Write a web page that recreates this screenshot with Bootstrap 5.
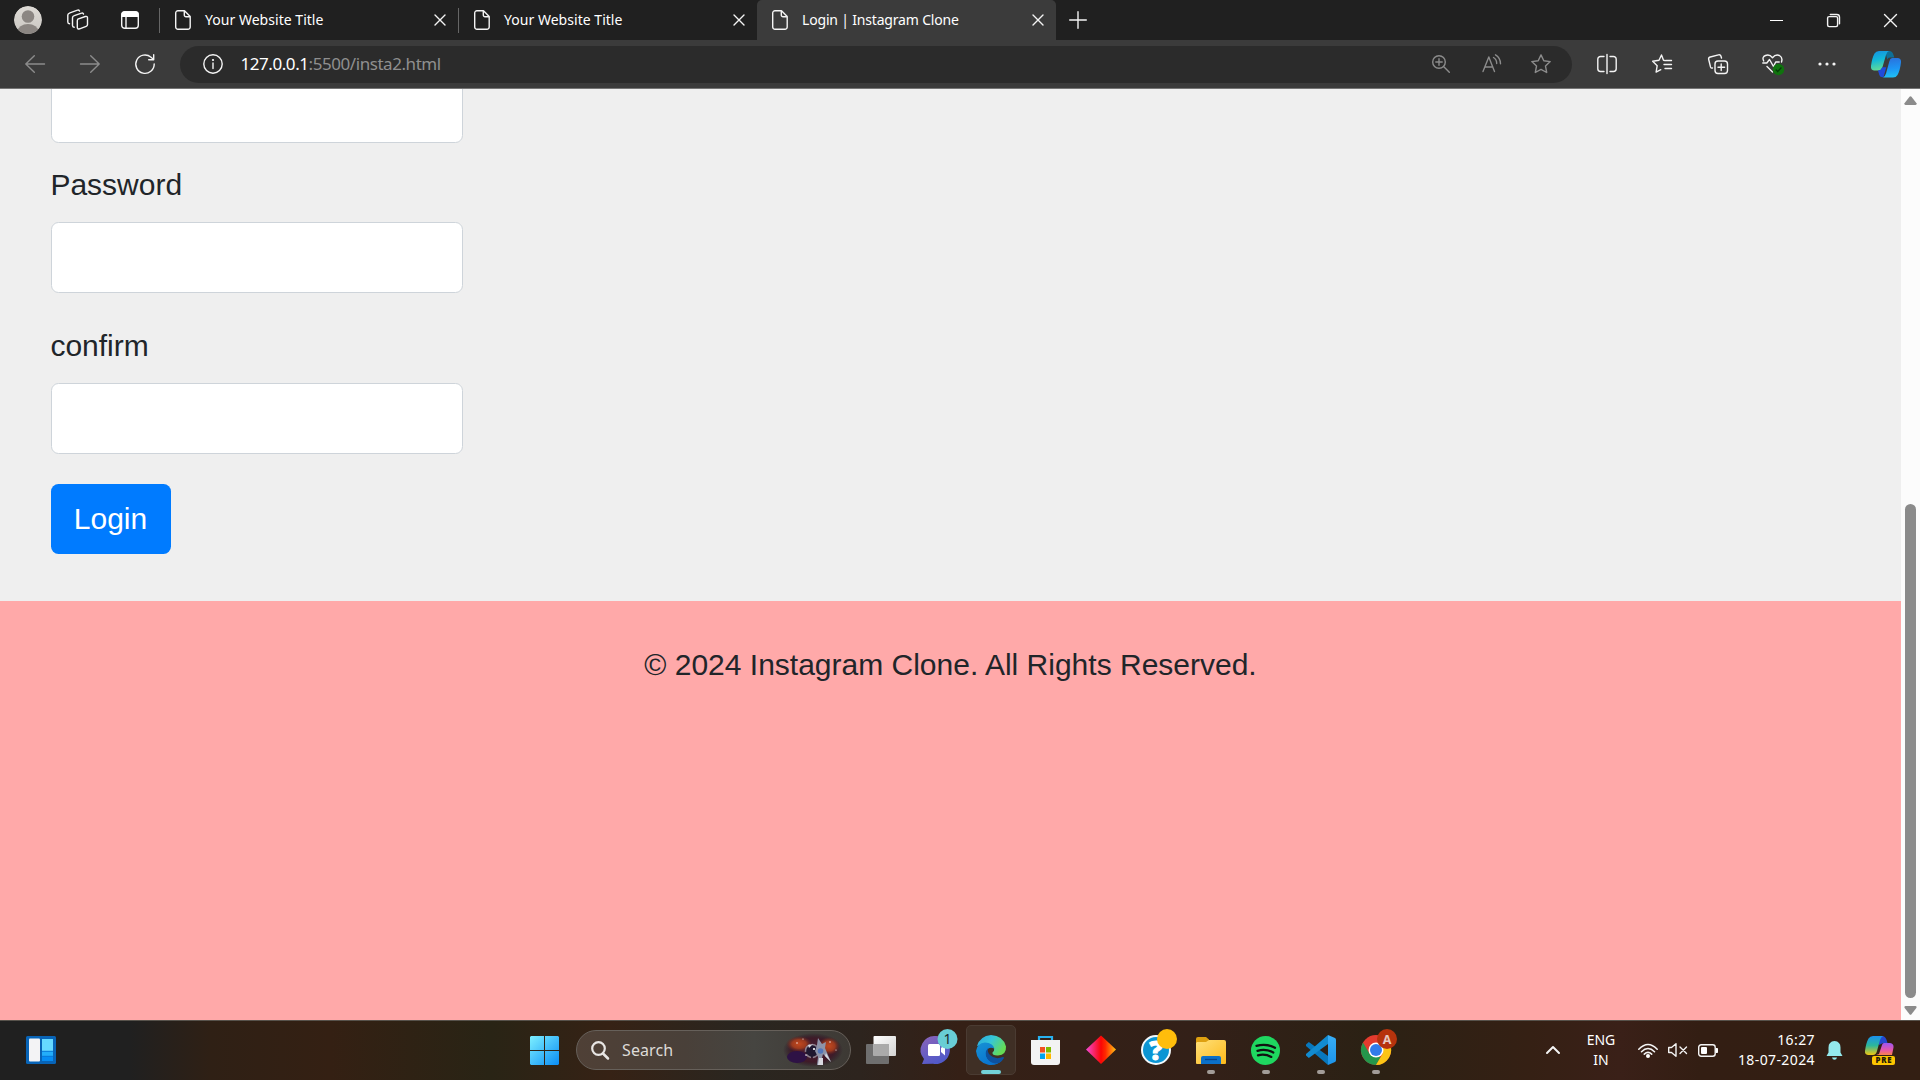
<!DOCTYPE html>
<html lang="en">
<head>
<meta charset="utf-8">
<meta name="viewport" content="width=device-width, initial-scale=1">
<title>Login | Instagram Clone</title>
<link href="https://cdn.jsdelivr.net/npm/bootstrap@5.3.0/dist/css/bootstrap.min.css" rel="stylesheet">
<style>
  body { font-family: "Noto Sans", "Open Sans", sans-serif; width: 1920px; height: 1080px; background: #202020; }
  svg { display: block; flex: none; overflow: visible; }
  .ln { fill: none; stroke: #f4f4f4; stroke-width: 1.4; stroke-linecap: round; stroke-linejoin: round; }
  .dim { stroke: #8c8c8c; }

  /* tab strip */
  .tabstrip { height: 40px; background: #202020; color: #fff; }
  .avatar { margin-left: 14px; }
  .btab { height: 40px; width: 299px; padding: 0 12px 0 16px; font-size: 14px; letter-spacing: .03px; line-height: 40px; }
  .btab span { margin-left: 14px; }
  .btab.plain { position: relative; }
  .btab.plain::before { content: ""; position: absolute; left: 0; top: 8px; width: 1px; height: 25px; background: #666; }
  .btab.current { background: #3b3b3b; border-radius: 5px 5px 0 0; letter-spacing: -.18px; padding-left: 15px; }
  .winbtns { width: 172px; }

  /* toolbar */
  .toolbar { height: 49px; background: #3b3b3b; border-bottom: 1px solid #757575; padding-left: 7px; }
  .slot { width: 55px; display: flex; justify-content: center; align-items: center; flex: none; }
  .pill { width: 1392px; height: 37px; margin: 0 7px 0 8px; border-radius: 19px; background: #2b2b2b; color: #8f8f8f; font-size: 17px; padding: 0 21px 0 23px; letter-spacing: -.44px; }
  .pill .url { margin-left: 18px; white-space: nowrap; }

  /* page */
  .page { height: 931px; font-family: "Liberation Sans", Arial, sans-serif; font-size: 30px; color: #212529; line-height: 1.5; }
  .loginarea { height: 512px; background: #efefef; padding: 0 0 47px 51px; }
  .fieldbox { width: 412px; height: 71px; border: 1px solid #ced4da; border-radius: 7.5px; flex: none; background: #fff; }
  .loginarea label { height: 45px; margin-bottom: 15px; margin-left: -.6px; flex: none; }
  .loginbtn { background: #007bff; border: 0; color: #fff; font-size: 30px; line-height: 45px; padding: 12px 1px 13px 0; width: 120px; border-radius: 7.5px; flex: none; }
  .foot { background: #ffa9a9; padding-top: 41px; }
  .scroll { width: 19px; background: #fcfcfc; padding: 7px 4px 5px; }
  .thumb { width: 11px; height: 494px; border-radius: 6px; background: #8b8b8b; }

  /* taskbar */
  .taskbar { height: 60px; border-top: 1px solid #57524b; color: #fff; padding-bottom: 1px;
    background: linear-gradient(90deg, #202020 0, #202020 130px, #2f2015 210px, #342013 330px, #292415 490px, #362215 610px, #2a2620 740px, #2d241e 860px, #352016 960px, #332018 1200px, #2b2114 1370px, #352014 1530px, #3a2018 1620px, #331e13 1700px, #331f13 1920px); }
  .search { width: 275px; height: 40px; border: 1px solid #66605a; border-radius: 20px; margin: 0 2px 0 4px; font-size: 16px; color: #dedbd8; padding: 0 8px 0 14px;
    background: linear-gradient(90deg, #4f4036, #494039 40%, #464541 65%, #3d3934); letter-spacing: .1px; }
  .task { height: 58px; position: relative; }
  .task.run::after { content: ""; position: absolute; bottom: 5px; left: 24px; width: 8px; height: 4px; border-radius: 2px; background: #a29c98; }
  .task.open::before { content: ""; position: absolute; left: 3px; top: 4px; width: 50px; height: 50px; border-radius: 5px; background: #3f2f25; border: 1px solid #4a3b32; }
  .task.open::after { content: ""; position: absolute; bottom: 5px; left: 18px; width: 20px; height: 4px; border-radius: 2px; background: #73d1d8; }
  .task svg { position: relative; }
  .tray { font-size: 14px; line-height: 20px; }
  .clock { width: 97px; letter-spacing: .4px; }
</style>
</head>
<body class="d-flex flex-column overflow-hidden">

<svg width="0" height="0" class="position-absolute">
  <defs>
    <symbol id="file" viewBox="0 0 16 20"><path class="ln" d="M3 .7h6.5L15.2 6.500V17a2.300 2.300 0 0 1-2.300 2.300H3A2.300 2.300 0 0 1 .7 17V3A2.300 2.300 0 0 1 3 .7zM9.300 .9V5a1.700 1.700 0 0 0 1.700 1.700h4"/></symbol>
    <symbol id="cross" viewBox="0 0 12 12"><path class="ln" d="M1 1l10 10M11 1L1 11"/></symbol>
    <linearGradient id="g-av" x2="0" y2="1"><stop stop-color="#dedbd6"/><stop offset="1" stop-color="#c9c6c1"/></linearGradient>
    <linearGradient id="g-win" x2="1" y2="1"><stop stop-color="#7df0ff"/><stop offset="1" stop-color="#0a8df5"/></linearGradient>
    <linearGradient id="g-cp1" x2=".2" y2="1"><stop stop-color="#168fe0"/><stop offset=".5" stop-color="#12b8d8"/><stop offset="1" stop-color="#5ed99a"/></linearGradient>
    <linearGradient id="g-cp2" x2=".1" y2="1"><stop stop-color="#2b6fda"/><stop offset=".6" stop-color="#1d96f5"/><stop offset="1" stop-color="#20bdf4"/></linearGradient>
    <linearGradient id="g-pr1" x2="0" y2="1"><stop stop-color="#1b91ee"/><stop offset=".5" stop-color="#2cb79b"/><stop offset="1" stop-color="#f1c610"/></linearGradient>
    <linearGradient id="g-pr2" x2="0" y2="1"><stop stop-color="#9b55f3"/><stop offset=".6" stop-color="#e757a8"/><stop offset="1" stop-color="#f9824b"/></linearGradient>
    <linearGradient id="g-chat" x2=".5" y2="1"><stop stop-color="#8c64b8"/><stop offset="1" stop-color="#5159c9"/></linearGradient>
    <linearGradient id="g-edge1" x2="1" y2=".5"><stop stop-color="#2aa6dc"/><stop offset=".5" stop-color="#36c6d8"/><stop offset="1" stop-color="#65dc55"/></linearGradient>
    <linearGradient id="g-edge2" x2=".6" y2="1"><stop stop-color="#1792d4"/><stop offset="1" stop-color="#0872cf"/></linearGradient>
    <linearGradient id="g-dia"><stop stop-color="#f44ad8"/><stop offset=".5" stop-color="#fb0505"/><stop offset=".65" stop-color="#ff2a00"/><stop offset="1" stop-color="#ffc414"/></linearGradient>
    <linearGradient id="g-fold" x2="1" y2="1"><stop stop-color="#ffe07a"/><stop offset="1" stop-color="#fdb91a"/></linearGradient>
    <linearGradient id="g-tv" x2="1" y2="1"><stop stop-color="#fff"/><stop offset="1" stop-color="#d2d2d2"/></linearGradient>
    <radialGradient id="g-neb"><stop stop-color="#4a2038"/><stop offset=".7" stop-color="#3f1a28"/><stop offset="1" stop-color="#2a1424" stop-opacity="0"/></radialGradient>
    <radialGradient id="g-fire"><stop stop-color="#c2481f"/><stop offset=".55" stop-color="#9c3a1e"/><stop offset="1" stop-color="#6b2620" stop-opacity="0"/></radialGradient>
    <linearGradient id="g-vs" x2="0" y2="1"><stop stop-color="#38aef6"/><stop offset="1" stop-color="#1c94ea"/></linearGradient>
  </defs>
</svg>

<header class="tabstrip d-flex align-items-center flex-shrink-0">
  <svg class="avatar" width="28" height="28" viewBox="0 0 28 28"><clipPath id="avc"><circle cx="14" cy="14" r="14"/></clipPath><g clip-path="url(#avc)"><circle cx="14" cy="14" r="14" fill="url(#g-av)"/><circle cx="14" cy="10.500" r="6.300" fill="#8b8682"/><ellipse cx="14" cy="25.500" rx="10.500" ry="7.500" fill="#8b8682"/></g></svg>
  <svg width="22" height="22" viewBox="0 0 22 22" style="margin-left:25px"><g class="ln"><path d="M10.800 10.200l7.500-2.700q2.200-.5 2.200 1.300v6.700q0 1.400-1.300 1.900l-6.600 2.400q-2.300.6-2.300-1.200v-6.500q0-1.300.5-1.900z"/><path d="M16.500 5q-.5-1.500-2-.9L7.300 6.700q-1.800.6-1.800 2V16.500q0 1.500 1.700 1.700"/><path d="M12.500 2q-.7-1.400-2-.9L2.900 3.800Q.8 4.500.8 6v7q0 1.500 1.700 1.700"/></g></svg>
  <svg width="18" height="18" viewBox="0 0 18 18" style="margin-left:32px"><rect x=".7" y=".7" width="16.600" height="16.600" rx="3" class="ln"/><path d="M.5 6V3A2.500 2.500 0 0 1 3 .5h12A2.500 2.500 0 0 1 17.500 3v3z" fill="#fff"/><path class="ln" d="M5 6v11"/></svg>
  <div class="d-flex" style="margin-left:20px">
    <div class="btab plain d-flex align-items-center"><svg width="16" height="20"><use href="#file"/></svg><span>Your Website Title</span><svg class="ms-auto" width="12" height="12"><use href="#cross"/></svg></div>
    <div class="btab plain d-flex align-items-center"><svg width="16" height="20"><use href="#file"/></svg><span>Your Website Title</span><svg class="ms-auto" width="12" height="12"><use href="#cross"/></svg></div>
    <div class="btab current d-flex align-items-center"><svg width="16" height="20"><use href="#file"/></svg><span>Login | Instagram Clone</span><svg class="ms-auto" width="12" height="12"><use href="#cross"/></svg></div>
  </div>
  <svg width="18" height="18" viewBox="0 0 18 18" style="margin-left:13px"><path class="ln" d="M9 .7v16.600M.7 9h16.600"/></svg>
  <div class="winbtns d-flex ms-auto">
    <div class="slot" style="width:57px"><svg width="13" height="13"><path d="M0 6.500h13" stroke="#fff"/></svg></div>
    <div class="slot" style="width:57px"><svg width="13" height="13" viewBox="0 0 13 13"><g class="ln"><rect x=".6" y="2.600" width="10" height="10" rx="1.500"/><path d="M3.300.5h6.500a2.700 2.700 0 0 1 2.700 2.700v6.500"/></g></svg></div>
    <div class="slot" style="width:57px"><svg width="13" height="13" viewBox="0 0 13 13"><path class="ln" d="M.5.5l12 12M12.500.5l-12 12"/></svg></div>
  </div>
</header>

<nav class="toolbar d-flex align-items-center flex-shrink-0">
  <div class="slot"><svg width="20" height="18" viewBox="0 0 20 18"><path class="ln dim" d="M19.500 9H.8M9.300.7L.8 9l8.500 8.300"/></svg></div>
  <div class="slot"><svg width="20" height="18" viewBox="0 0 20 18"><path class="ln dim" d="M.5 9h18.700M10.700.7L19.200 9l-8.500 8.300"/></svg></div>
  <div class="slot"><svg width="20" height="20" viewBox="0 0 20 20"><path class="ln" d="M19.200 10A9.200 9.200 0 1 1 16 3.200l2.700 2.300M18.700.8v4.900h-5"/></svg></div>
  <div class="pill d-flex align-items-center">
    <svg width="20" height="20" viewBox="0 0 20 20" style="margin-left:-.5px"><circle class="ln" cx="10" cy="10" r="9.200"/><path class="ln" d="M10 9v5.500"/><circle cx="10" cy="6" r="1.100" fill="#fff"/></svg>
    <div class="url"><span class="text-white">127.0.0.1</span>:5500/insta2.html</div>
    <svg class="ms-auto" width="18" height="18" viewBox="0 0 18 18"><path class="ln dim" d="M11.800 11.800l5.500 5.500M3.800 7h6.400M7 3.800v6.400"/><circle class="ln dim" cx="7" cy="7" r="6.300"/></svg>
    <svg width="20" height="18" viewBox="0 0 20 18" style="margin-left:32px"><path class="ln dim" d="M1 16.500L6.800 2l5.700 14.500M2.800 12h8M11.500 2.500q3.300 2 3.200 6M13.500-.2q5 3 5 9"/></svg>
    <svg width="20" height="20" viewBox="0 0 20 20" style="margin-left:29px"><path class="ln dim" d="M10 .9l2.800 5.900 6.400.8-4.700 4.500 1.200 6.400L10 15.400l-5.700 3.100 1.200-6.400L.8 7.600l6.400-.8z"/></svg>
  </div>
  <div class="slot"><svg width="20" height="20" viewBox="0 0 20 20"><path class="ln" d="M7 2.500H3.500A2.700 2.700 0 0 0 .8 5.200v9.600a2.700 2.700 0 0 0 2.700 2.700H7M13 2.500h3.500a2.700 2.700 0 0 1 2.700 2.700v9.600a2.700 2.700 0 0 1-2.700 2.700H13M10 .5v19"/></svg></div>
  <div class="slot"><svg width="20" height="20" viewBox="0 0 20 20" style="margin-left:1px"><path class="ln" d="M13 6.500L11.500 6.300 9.500 1 7 6.200.7 7.300l4.500 4.400-1.100 6.400 4.700-2.400M14 6.500h5.500M12 10.500h7.500M13 14.500h6.500"/></svg></div>
  <div class="slot"><svg width="20" height="20" viewBox="0 0 20 20" style="margin-left:2px"><rect class="ln" x="7" y="7" width="12.500" height="12.500" rx="3"/><path class="ln" d="M13.200 10v6.600M10 13.300h6.600M13.500 4l-.6-2q-.6-1.700-2.400-1.200L2.200 3Q.2 3.600.7 5.500l1.800 7.400Q3 14.500 4.500 14"/></svg></div>
  <div class="slot"><svg width="22" height="20" viewBox="0 0 22 20" style="margin-left:3px"><path class="ln" d="M1.700 7Q-.3 3 3.500 1.500 7.500 0 10.500 3.700 13.500 0 17.500 1.500 21 3.500 19.500 8M.8 9h4L7.500 5.500l4 7 2.200-4.500h3.500M5 12.500l5.500 5.500"/><circle cx="16.500" cy="15.500" r="5.800" fill="#10730e"/><path d="M13.700 15.500l2 2 3.700-4" fill="none" stroke="#063c08" stroke-width="1.300"/></svg></div>
  <div class="slot"><svg width="18" height="4"><g fill="#f4f4f4"><circle cx="2" cy="2" r="1.600"/><circle cx="9" cy="2" r="1.600"/><circle cx="16" cy="2" r="1.600"/></g></svg></div>
  <svg width="30" height="27" viewBox="0 0 30 27" style="margin-left:17px"><path d="M14 0h5q2.500.5 3.500 4l.8 2.500H19q-2 0-2.700 2z" fill="#0e6f98"/><path d="M8 0h10q-2 .7-3 4l-3.500 12q-1 3.500-4 3.500H3q-3.500-.5-3-4.500Q1 7 3.500 2.500 5 0 8 0z" fill="url(#g-cp1)"/><path d="M7 19.500q3-.3 4.300-3.300h4L12.500 26q-3 .8-4.200-2z" fill="#1f4bdb"/><path d="M21 7h6q3.500.7 3 4.500-1 8-3.500 12.500Q25 26.500 22 26.500H12q2-.8 3-4l3.300-12Q19 7.300 21 7z" fill="url(#g-cp2)"/></svg>
</nav>

<div class="d-flex page flex-shrink-0">
  <div class="flex-grow-1 d-flex flex-column">
    <main class="loginarea d-flex flex-column justify-content-end align-items-start overflow-hidden">
      <div class="fieldbox" style="margin-bottom:19px"></div>
      <label>Password</label>
      <div class="fieldbox" style="margin-bottom:30px"></div>
      <label>confirm</label>
      <div class="fieldbox" style="margin-bottom:30px"></div>
      <button class="loginbtn text-center" type="button">Login</button>
    </main>
    <footer class="foot flex-grow-1 text-center">© 2024 Instagram Clone. All Rights Reserved.</footer>
  </div>
  <div class="scroll d-flex flex-column align-items-center justify-content-between">
    <svg width="13" height="9" viewBox="0 0 13 9"><path d="M5.500.7q1-1 2 0l5 6.500q.5 1.500-1 1.800H1.500Q0 8.700.5 7.200z" fill="#8b8b8b"/></svg>
    <div class="d-flex flex-column align-items-center" style="gap:8px"><div class="thumb"></div>
    <svg width="13" height="9" viewBox="0 0 13 9"><path d="M5.500 8.300q1 1 2 0l5-6.500Q13 .3 11.500 0h-10Q0 .3.500 1.800z" fill="#8b8b8b"/></svg></div>
  </div>
</div>

<footer class="taskbar d-flex align-items-center flex-shrink-0">
  <svg width="30" height="28" viewBox="0 0 30 28" style="margin:0 461px 0 26px"><rect width="30" height="28" rx="1.500" fill="#0864b7"/><rect x="3" y="2.500" width="11" height="23" rx="1" fill="#f3f3f5"/><path d="M16 3h11v12H16z" fill="#66d9ff"/><path d="M16 15h11v5H16z" fill="#23aefa"/><path d="M16 20h11v5H16z" fill="#068cf3"/><path d="M16 15.300h11M16 20.300h11" stroke="#0878d8"/></svg>
  <div class="slot task"><svg width="29" height="29" viewBox="0 0 29 29"><path fill="url(#g-win)" d="M1 0h13v14H0V1zM15 0h13l1 1v13H15zM0 15h14v14H1l-1-1zM15 15h14v13l-1 1H15z"/></svg></div>
  <div class="search d-flex align-items-center">
    <svg width="18" height="19" viewBox="0 0 18 19"><circle cx="7.500" cy="7.500" r="6.300" fill="none" stroke="#e8e6e4" stroke-width="2.200"/><path d="M12 12.500l5 5" stroke="#e8e6e4" stroke-width="2.500" stroke-linecap="round"/></svg>
    <span style="margin-left:13px">Search</span>
    <svg class="ms-auto" width="58" height="32" viewBox="0 0 58 32"><ellipse cx="29" cy="16" rx="30" ry="17" fill="url(#g-neb)"/><ellipse cx="15" cy="10" rx="13" ry="8" fill="url(#g-fire)"/><ellipse cx="45" cy="12" rx="11" ry="9" fill="url(#g-fire)"/><ellipse cx="13" cy="23" rx="10" ry="6" fill="#2e1245"/><circle cx="28" cy="17" r="6.500" fill="#1f1830" stroke="#8d7f8c" stroke-width="1.500" stroke-dasharray="9 2 5 3"/><path d="M34 4l4 6 4-2-1 6 6 14-8-8-1 4v7h-5l1-8-3-6 2-6z" fill="#8d93a8"/><path d="M35 24h4v7h-5zM42 19l5 9-6-6zM24 11l5-1-4 4z" fill="#d9d9e0"/><circle cx="36.500" cy="17" r="2.800" fill="#5275b9"/><g fill="#fff"><circle cx="13" cy="9" r=".7"/><circle cx="30" cy="15" r="1.100"/><circle cx="46" cy="8" r=".7"/><circle cx="22" cy="21" r=".8"/><circle cx="19" cy="5" r=".6"/><circle cx="52" cy="16" r=".6"/></g></svg>
  </div>
  <div class="slot task"><svg width="30" height="28" viewBox="0 0 30 28"><rect y="8" width="23" height="20" rx="1" fill="#6f6f6f"/><rect x="7.500" width="22.500" height="20" rx="1" fill="url(#g-tv)"/><path d="M7.500 8H23v12H7.500z" fill="#aaa"/></svg></div>
  <div class="slot task"><svg width="30" height="30" viewBox="0 0 30 30"><path d="M15 1a14 14 0 1 1-3 27.700L1 29l2-5A14 14 0 0 1 15 1z" fill="url(#g-chat)"/><rect x="7" y="9" width="12" height="12" rx="1.500" fill="#fff"/><path d="M20 13l4-3.500v11L20 17z" fill="#fff"/><circle cx="26.500" cy="4" r="10" fill="#68cdd5"/><text x="26.500" y="9" font-size="14" text-anchor="middle" fill="#17272a">1</text></svg></div>
  <div class="slot task open"><svg width="30" height="30" viewBox="0 0 30 30"><path d="M1 11Q4 1 15 0 27 .5 30 11.500q.5 8.500-8 9-6 .2-5.500-3 2-1.500 1.700-4Q15 9 10 9z" fill="url(#g-edge1)"/><path d="M0 16Q1 8 9 7.500q8 .5 9.200 6-6-2.500-8 3.500-1 7 6 10 5 1.500 10-2-5 6-14 4.800Q1 27 0 16z" fill="url(#g-edge2)"/><path d="M12 13q-4 5-1 10 4 7 12 5 3-1.500 5-5-.2-1-1-1-8 3-13-2-3-3-2-7z" fill="#0d519f"/></svg></div>
  <div class="slot task"><svg width="29" height="29" viewBox="0 0 29 29"><path d="M8 6V1h13v5" fill="none" stroke="#28b1ef" stroke-width="2.200"/><path d="M0 4h29v22q0 3-3 3H3q-3 0-3-3z" fill="#f3f3f3"/><path d="M9 11h5v5.500H9z" fill="#f25022"/><path d="M15 11h5v5.500h-5z" fill="#7fba00"/><path d="M9 17.500h5V23H9z" fill="#00a4ef"/><path d="M15 17.500h5V23h-5z" fill="#ffb900"/></svg></div>
  <div class="slot task"><svg width="30" height="30" viewBox="0 0 30 30"><path d="M15 .5L30 14.500 15 29 0 14.500z" fill="url(#g-dia)"/></svg></div>
  <div class="slot task"><svg width="30" height="30" viewBox="0 0 30 30"><circle cx="15" cy="15" r="14" fill="#0b95d4" stroke="#f3f9fc" stroke-width="2"/><text x="15" y="24.500" font-size="26" font-weight="900" text-anchor="middle" fill="#fff" stroke="#fff">?</text><circle cx="26" cy="4" r="10" fill="#ffbd0b"/></svg></div>
  <div class="slot task run"><svg width="30" height="27" viewBox="0 0 30 27"><path d="M0 10V2Q0 0 2 0h8l3 2.500V10z" fill="#dea010"/><path d="M1 5h9l3-2h15q2 0 2 2v21q0 1-1 1H1q-1 0-1-1V6z" fill="url(#g-fold)"/><path d="M5 27v-6q0-2 2-2h16q2 0 2 2v6z" fill="#0b70c8"/><path d="M9 22.500h12" stroke="#07458c" stroke-width="1.300"/></svg></div>
  <div class="slot task run"><svg width="29" height="29" viewBox="0 0 29 29"><circle cx="14.500" cy="14.500" r="14.500" fill="#1fd760"/><path d="M5.500 9.800q10-2.600 18.500 1.900M6.500 14.800q8.500-2.300 15.800 1.700M7 19.300q7-1.800 13.300 1.600" fill="none" stroke="#111" stroke-width="2.300" stroke-linecap="round"/></svg></div>
  <div class="slot task run"><svg width="30" height="30" viewBox="0 0 30 30"><path d="M0 9.500L2.800 7 22 21v9L0 11z" fill="#0878bd"/><path d="M0 20.500L2.800 23 22 9V0L0 19z" fill="#128bd0"/><path d="M22 0l7 3q1 .6 1 2v20q0 1.400-1 2l-7 3z" fill="url(#g-vs)"/></svg></div>
  <div class="slot task run"><svg width="30" height="30" viewBox="0 0 30 30"><circle cx="15" cy="15" r="15" fill="#e33b2e"/><path d="M2 7.500L9 19.500 15 22l5 0-5 8A15 15 0 0 1 2 7.500z" fill="#25964b"/><path d="M15 30l7-12V8h6.500A15 15 0 0 1 15 30z" fill="#fdc415"/><circle cx="15" cy="15" r="7.500" fill="#fff"/><circle cx="15" cy="15" r="6" fill="#327bea"/><circle cx="26" cy="4" r="10" fill="#b6330d"/><text x="26" y="8.500" font-size="12.500" font-weight="700" text-anchor="middle" fill="#e6c9c0">A</text></svg></div>

  <div class="tray d-flex align-items-center ms-auto" style="padding-right:25px">
    <svg width="14" height="8" viewBox="0 0 14 8"><path class="ln" style="stroke-width:2" d="M1 7l6-6 6 6"/></svg>
    <div class="text-center" style="margin-left:22px;width:38px">ENG<br>IN</div>
    <svg width="20" height="15" viewBox="0 0 20 15" style="margin-left:18px"><path class="ln" style="stroke-width:1.600" d="M.8 6.200q9.200-9.500 18.400 0M3.500 8.700q6.500-6.500 13 0M6.300 11.200q3.700-3.500 7.400 0"/><circle cx="10" cy="13" r="2" fill="#fff"/></svg>
    <svg width="19" height="14" viewBox="0 0 19 14" style="margin-left:10px"><path class="ln" d="M.7 4.500H3.500L8 .8v12.400L3.500 9.500H.7zM12 4l6.500 6.500M18.500 4L12 10.500"/></svg>
    <svg width="20" height="13" viewBox="0 0 20 13" style="margin-left:11px"><rect class="ln" x=".7" y=".7" width="16.500" height="11.600" rx="2.500"/><rect x="3" y="3" width="6" height="7" rx="1" fill="#fff"/><path d="M18 4.500h1.500v4H18z" fill="#fff" stroke="#fff"/></svg>
    <div class="clock text-end">16:27<br>18-07-2024</div>
    <svg width="17" height="19" viewBox="0 0 17 19" style="margin-left:11px;margin-right:1px"><path d="M8.500 0q6 .5 6 6.500v5l2 3.500H.5l2-3.500v-5q0-6 6-6.500zM6 16.500h5q-.5 2.200-2.500 2.200T6 16.500z" fill="#94e9ec"/></svg>
    <svg width="30" height="29" viewBox="0 0 30 29" style="margin-left:21px"><path d="M14 0h4q3 .5 4.500 7H18l-4 2z" fill="#2447cf"/><path d="M8 0h10q-2 .8-3 4l-3 11q-1 4-4 4H3q-3.500-.4-3-4Q1 7 3.500 2.500 5 0 8 0z" fill="url(#g-pr1)"/><path d="M19 7h6q4 .7 3.500 4.500L27 19H11l3-1 3-9q.5-1.800 2-2z" fill="url(#g-pr2)"/><rect x="7" y="20" width="23" height="9" rx="2" fill="#fdc500"/><text x="18.500" y="27.300" font-family="Open Sans" font-size="7.800" font-weight="800" text-anchor="middle" fill="#241a08" textLength="16">PRE</text></svg>
  </div>
</footer>
<script src="https://cdn.jsdelivr.net/npm/bootstrap@5.3.0/dist/js/bootstrap.bundle.min.js"></script>
</body>
</html>
